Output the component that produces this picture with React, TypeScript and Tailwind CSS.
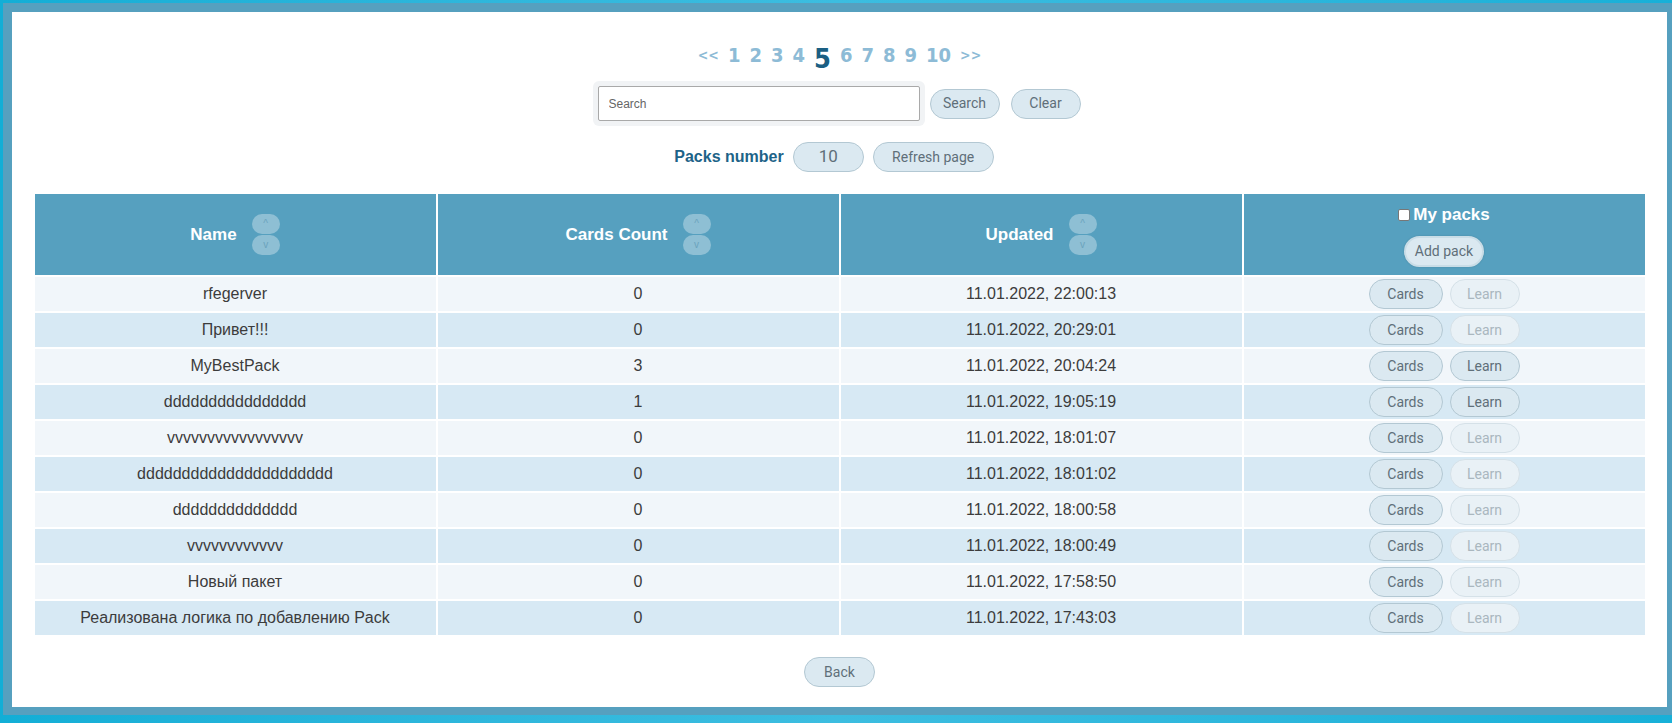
const packs = [
  { name: 'rfegerver', count: 0, updated: '11.01.2022, 22:00:13' },
  { name: 'Привет!!!', count: 0, updated: '11.01.2022, 20:29:01' },
  { name: 'MyBestPack', count: 3, updated: '11.01.2022, 20:04:24' },
  { name: 'dddddddddddddddd', count: 1, updated: '11.01.2022, 19:05:19' },
  { name: 'vvvvvvvvvvvvvvvvv', count: 0, updated: '11.01.2022, 18:01:07' },
  { name: 'dddddddddddddddddddddd', count: 0, updated: '11.01.2022, 18:01:02' },
  { name: 'dddddddddddddd', count: 0, updated: '11.01.2022, 18:00:58' },
  { name: 'vvvvvvvvvvvv', count: 0, updated: '11.01.2022, 18:00:49' },
  { name: 'Новый пакет', count: 0, updated: '11.01.2022, 17:58:50' },
  { name: 'Реализована логика по добавлению Pack', count: 0, updated: '11.01.2022, 17:43:03' },
]

const pages = ['1', '2', '3', '4', '5', '6', '7', '8', '9', '10']

function PillButton({ children, className = '', disabled = false }: { children: React.ReactNode; className?: string; disabled?: boolean }) {
  return (
    <button
      disabled={disabled}
      className={
        'h-[30px] rounded-full border font-["Roboto",sans-serif] text-[14px] font-normal ' +
        (disabled
          ? 'border-[#d5e1e8] bg-[#e9f1f6] text-[#aab7bf]'
          : 'border-[#b3c8d3] bg-[#dbe9f1] text-[#5f6f79]') +
        ' ' +
        className
      }
    >
      {children}
    </button>
  )
}

function SortButtons() {
  return (
    <div className="flex flex-col gap-px">
      <span className="flex h-[20px] w-[28px] items-center justify-center rounded-full bg-[#8ebfd4] text-[10px] font-normal leading-none text-[#6ba3bd]">
        ^
      </span>
      <span className="flex h-[20px] w-[28px] items-center justify-center rounded-full bg-[#8ebfd4] text-[10px] font-normal leading-none text-[#6ba3bd]">
        v
      </span>
    </div>
  )
}

function SortHeader({ label }: { label: string }) {
  return (
    <th className="w-1/4 bg-[#56a0bf] p-0 align-middle">
      <div className="flex items-center justify-center gap-[15px]">
        <span className="text-[17px] font-bold text-white">{label}</span>
        <SortButtons />
      </div>
    </th>
  )
}

export default function App() {
  return (
    <div className="h-[723px] w-[1672px] overflow-hidden bg-gradient-to-r from-[#12aed6] via-[#3cbde0] to-[#17b0d8] pl-[3px] pt-[3px] font-['Liberation_Sans',Arial,sans-serif]">
      <div className="h-[712px] w-[1673px] border-[9px] border-b-[8px] border-[#56a0bf] bg-white">
        <div className="flex h-full flex-col items-center">
          {/* pagination */}
          <div className="mt-[28px] flex h-[30px] items-center gap-[9px] font-['DejaVu_Sans_Condensed','DejaVu_Sans',sans-serif] font-bold text-[#8dbbd6] [font-stretch:condensed]">
            <span className="text-[14px]">&lt;&lt;</span>
            {pages.map((p) =>
              p === '5' ? (
                <span key={p} className="mt-[6px] text-[27px] leading-none text-[#1b5f83]">
                  {p}
                </span>
              ) : (
                <span key={p} className="text-[20px] leading-none">
                  {p}
                </span>
              )
            )}
            <span className="text-[14px]">&gt;&gt;</span>
          </div>

          {/* search */}
          <div className="mt-[11px] flex items-center gap-[11px] pr-[6px]">
            <div className="mr-[-6px] rounded-[6px] bg-[#f1f3f5] p-[5px]">
              <input
                placeholder="Search"
                className="h-[35px] w-[322px] rounded-[2px] border border-[#a9a9a9] bg-white px-[10px] font-['Liberation_Sans',Arial,sans-serif] text-[12px] text-[#555] outline-none placeholder:text-[#666]"
              />
            </div>
            <PillButton className="w-[70px]">Search</PillButton>
            <PillButton className="w-[70px]">Clear</PillButton>
          </div>

          {/* packs number */}
          <div className="mr-[11px] mt-[16px] flex items-center gap-[9px]">
            <span className="text-[16px] font-bold text-[#1d6388]">Packs number</span>
            <div className="flex h-[30px] w-[71px] items-center justify-center rounded-full border border-[#b3c8d3] bg-[#dbe9f1] font-['Roboto',sans-serif] text-[17px] text-[#5f6f79]">
              10
            </div>
            <PillButton className="w-[121px]">Refresh page</PillButton>
          </div>

          {/* table */}
          <table className="mt-[20px] w-[1614px] table-fixed border-separate border-spacing-[2px]">
            <thead>
              <tr className="h-[81px]">
                <SortHeader label="Name" />
                <SortHeader label="Cards Count" />
                <SortHeader label="Updated" />
                <th className="w-1/4 bg-[#56a0bf] p-0 align-middle">
                  <div className="flex flex-col items-center gap-[9px]">
                    <label className="flex items-center gap-[3px] text-[17px] font-bold text-white">
                      <span className="h-[12px] w-[12px] rounded-[2px] border border-[#777] bg-white" />
                      My packs
                    </label>
                    <button className="h-[31px] w-[80px] rounded-full border-2 border-[#c9dde7] bg-[#dbe9f1] font-['Roboto',sans-serif] text-[14px] font-normal text-[#5f6f79] shadow-[0_0_2px_rgba(0,0,0,0.15)]">
                      Add pack
                    </button>
                  </div>
                </th>
              </tr>
            </thead>
            <tbody>
              {packs.map((p, i) => {
                const bg = i % 2 === 0 ? 'bg-[#f1f6fa]' : 'bg-[#d7e9f4]'
                return (
                  <tr key={i} className="h-[34px] text-[16px] text-[#3c3c3c]">
                    <td className={`${bg} p-0 text-center`}>{p.name}</td>
                    <td className={`${bg} p-0 text-center`}>{p.count}</td>
                    <td className={`${bg} p-0 text-center`}>{p.updated}</td>
                    <td className={`${bg} p-0`}>
                      <div className="flex items-center justify-center gap-[7px]">
                        <PillButton className="w-[74px]">Cards</PillButton>
                        <PillButton className="w-[70px]" disabled={p.count === 0}>
                          Learn
                        </PillButton>
                      </div>
                    </td>
                  </tr>
                )
              })}
            </tbody>
          </table>

          <PillButton className="mt-[20px] w-[71px]">Back</PillButton>
        </div>
      </div>
    </div>
  )
}
